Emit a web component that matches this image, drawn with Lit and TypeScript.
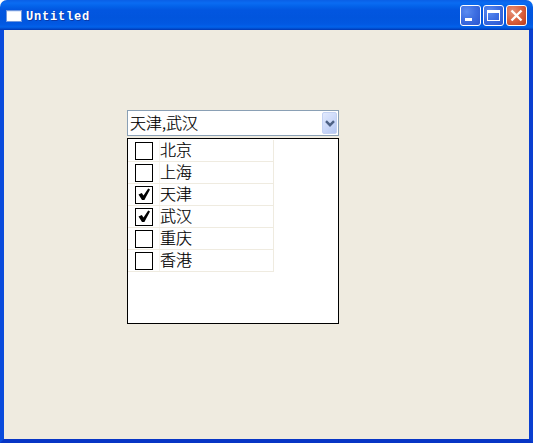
import { LitElement, html, css, svg } from "lit";
import { customElement } from "lit/decorators.js";

const ROWS: [string, boolean][] = [
  ["北京", false],
  ["上海", false],
  ["天津", true],
  ["武汉", true],
  ["重庆", false],
  ["香港", false],
];

@customElement("app-root")
export class AppRoot extends LitElement {
  static styles = css`
    :host { display: block; width: 533px; height: 443px; overflow: hidden; }
    * { box-sizing: border-box; }
    .window {
      width: 533px; height: 443px; display: flex; flex-direction: column;
      background: #e9e7e0; border-radius: 7px 7px 0 0;
    }
    .titlebar {
      height: 30px; flex: none; display: flex; align-items: center;
      padding: 2px 6px 0 7px;
      border-radius: 7px 7px 0 0;
      background: linear-gradient(180deg, #0a5fe6 0%, #0a6cf2 3px, #0463ea 6px, #0256e0 10px, #0155dd 18px, #0258e2 24px, #0262ea 27px, #0148c8 29px, #0135b0 30px);
      color: #fff;
    }
    .appicon { width: 14px; height: 10px; flex: none; margin-right: 5px; background: #fff; border-top: 1px solid #dfe9fa; box-shadow: 0 0 0 1px #6f97de; }
    .title { font: bold 12px/14px "Liberation Mono", "DejaVu Sans Mono", monospace; letter-spacing: 0.8px; flex: 1; padding-top: 2px; text-shadow: 1px 1px 0 #0a3aa8; }
    .btns { display: flex; gap: 2px; margin-top: -1px; }
    .btn {
      width: 21px; height: 21px; border: 1px solid #fff; border-radius: 3px;
      background: radial-gradient(circle at 30% 30%, #5c8cf0 0%, #3e6fe2 45%, #2a55cf 100%);
      display: flex; align-items: center; justify-content: center; padding: 0;
    }
    .btn.close { background: radial-gradient(circle at 30% 30%, #e79178 0%, #d9623f 50%, #bc3a1a 100%); }
    .btn svg { display: block; }
    .frame {
      flex: 1; display: flex; flex-direction: column;
      border: 4px solid #0a3fd0; border-top: 0;
      border-left-color: #0a4bdc; border-right-color: #0a3fd0; border-bottom-color: #0735c5;
    }
    .client { flex: 1; background: #efebe0; padding: 80px 0 0 123px; }
    .combo {
      width: 212px; height: 26px; border: 1px solid #8aa0b5; background: #fff;
      display: flex; align-items: center; justify-content: space-between;
      padding: 0 1px 0 2px;
      font: 300 16px/22px "Noto Sans CJK SC", "Liberation Sans", sans-serif; color: #000;
      -webkit-text-stroke: 0.2px #000;
    }
    .combo-text { padding-bottom: 2px; }
    .arrow {
      width: 15px; height: 22px; border: 1px solid #c4d2f3; border-radius: 2px;
      background: linear-gradient(135deg, #e2eafe 0%, #c8d6f8 60%, #b3c6f3 100%);
      display: flex; align-items: center; justify-content: center;
    }
    .list {
      width: 212px; height: 186px; margin-top: 2px; background: #fff;
      border: 1px solid #000; padding: 1px 0 0 0;
    }
    .row {
      width: 146px; height: 22px; display: flex; align-items: center;
      border-bottom: 1px solid #efebe0; border-right: 1px solid #efebe0;
      font: 300 16px/21px "Noto Sans CJK SC", "Liberation Sans", sans-serif; color: #000;
      -webkit-text-stroke: 0.2px #000;
    }
    .cell { width: 32px; height: 21px; flex: none; display: flex; align-items: center; justify-content: center; border-right: 1px solid #f6f4ee; }
    .box { width: 18px; height: 18px; margin-top: 1px; border: 1px solid #000; background: #fff; display: flex; align-items: center; justify-content: center; }
    .label { padding-bottom: 2px; }
  `;

  private check() {
    return html`<svg width="16" height="16" viewBox="0 0 16 16">${svg`<path d="M2.5 7.5 L5.8 6 L7.5 8.6 L12.2 1.5 L14 2.4 L8.4 13 L6 13 Z" fill="#000"/>`}</svg>`;
  }

  render() {
    return html`
      <div class="window">
        <div class="titlebar">
          <div class="appicon"></div>
          <div class="title">Untitled</div>
          <div class="btns">
            <div class="btn"><svg width="13" height="13" viewBox="0 0 13 13"><rect x="1" y="9" width="7" height="3" fill="#fff"/></svg></div>
            <div class="btn"><svg width="15" height="15" viewBox="0 0 15 15"><rect x="1.5" y="2.5" width="12" height="10" fill="none" stroke="#fff"/><rect x="1" y="2" width="13" height="3" fill="#fff"/></svg></div>
            <div class="btn close"><svg width="15" height="15" viewBox="0 0 15 15"><path d="M2.5 2.5 L12.5 12.5 M12.5 2.5 L2.5 12.5" stroke="#fff" stroke-width="2.4" fill="none"/></svg></div>
          </div>
        </div>
        <div class="frame">
          <div class="client">
            <div class="combo">
              <span class="combo-text">天津,武汉</span>
              <div class="arrow"><svg width="10" height="7" viewBox="0 0 10 7"><path d="M1 1.2 L5 5.2 L9 1.2" fill="none" stroke="#4d6185" stroke-width="2.4"/></svg></div>
            </div>
            <div class="list">
              ${ROWS.map(([t, c]) => html`
                <div class="row">
                  <div class="cell"><div class="box">${c ? this.check() : ""}</div></div>
                  <span class="label">${t}</span>
                </div>`)}
            </div>
          </div>
        </div>
      </div>
    `;
  }
}
